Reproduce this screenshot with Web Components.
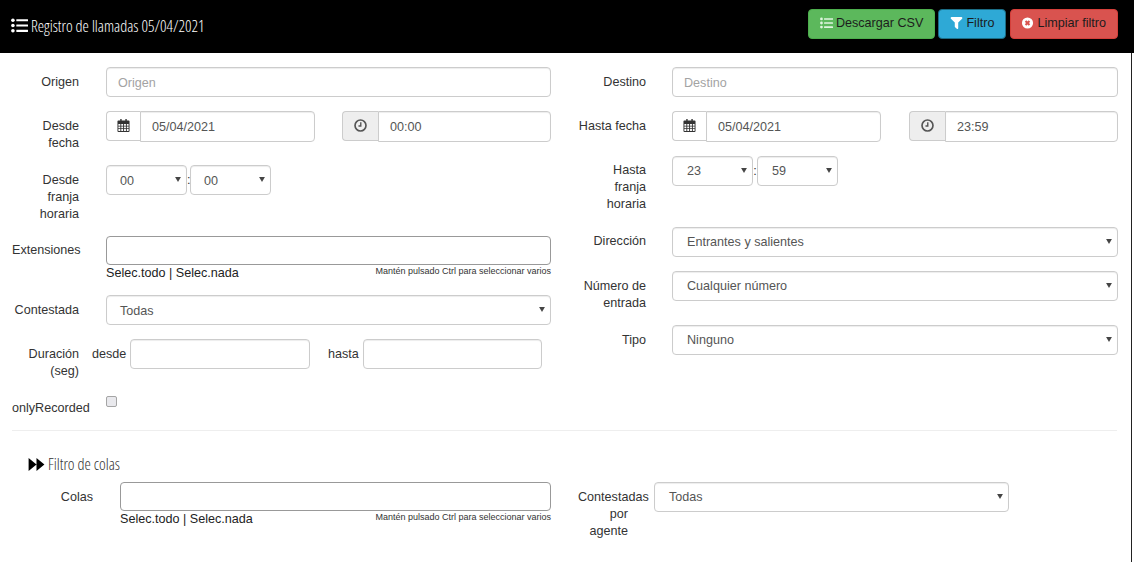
<!DOCTYPE html>
<html lang="es">
<head>
<meta charset="utf-8">
<title>Registro de llamadas</title>
<style>
    html, body { margin: 0; padding: 0; background: #fff; }
    body { font: 12.6px/17px "Liberation Sans", Arial, sans-serif; color: #333; }
</style>
</head>
<body>

<call-page>
    <call-header slot="header" heading="Registro de llamadas 05/04/2021">
        <call-button tone="success" icon="list">Descargar CSV</call-button>
        <call-button tone="info" icon="filter">Filtro</call-button>
        <call-button tone="danger" icon="times" style="margin-left:1px;padding-left:10px">Limpiar filtro</call-button>
    </call-header>

    <call-columns slot="top">
        <div slot="left">
            <call-field label="Origen"><call-input placeholder="Origen"></call-input></call-field>
            <call-field label="Desde fecha">
                <call-pair>
                    <call-addon-input icon="calendar" value="05/04/2021" style="width:209px"></call-addon-input>
                    <call-addon-input icon="clock" value="00:00" style="width:209px"></call-addon-input>
                </call-pair>
            </call-field>
            <call-field label="Desde<br>franja<br>horaria">
                <call-time-range from="00" to="00"></call-time-range>
            </call-field>
            <call-field label="Extensiones" style="--top:6px"><call-multi></call-multi></call-field>
            <call-field label="Contestada"><call-select value="Todas"></call-select></call-field>
            <call-field label="Duración (seg)" style="--gap:13px">
                <call-duration></call-duration>
            </call-field>
            <call-field label="onlyRecorded"><call-check></call-check></call-field>
        </div>
        <div slot="right">
            <call-field label="Destino"><call-input placeholder="Destino"></call-input></call-field>
            <call-field label="Hasta fecha">
                <call-pair>
                    <call-addon-input icon="calendar" value="05/04/2021" style="width:209px"></call-addon-input>
                    <call-addon-input icon="clock" value="23:59" style="width:209px"></call-addon-input>
                </call-pair>
            </call-field>
            <call-field label="Hasta<br>franja<br>horaria" style="--top:6px;--bottom:0px">
                <call-time-range from="23" to="59"></call-time-range>
            </call-field>
            <call-field label="Dirección" style="--top:6px"><call-select value="Entrantes y salientes"></call-select></call-field>
            <call-field label="Número de entrada"><call-select value="Cualquier número"></call-select></call-field>
            <call-field label="Tipo"><call-select value="Ninguno"></call-select></call-field>
        </div>
    </call-columns>

    <call-section slot="section" heading="Filtro de colas"></call-section>

    <call-columns slot="bottom">
        <div slot="left">
            <call-field label="Colas" style="margin-left:14px"><call-multi></call-multi></call-field>
        </div>
        <div slot="right">
            <call-field label="Contestadas por agente" style="--label:50px">
                <call-select value="Todas" style="width:355px"></call-select>
            </call-field>
        </div>
    </call-columns>
</call-page>

<script>
const ICONS = {
    list: `<svg viewBox="0 0 16 14" fill="currentColor"><circle cx="1.8" cy="2" r="1.7"/><circle cx="1.8" cy="7" r="1.7"/><circle cx="1.8" cy="12" r="1.7"/><rect x="5" y="1" width="11" height="2" rx=".3"/><rect x="5" y="6" width="11" height="2" rx=".3"/><rect x="5" y="11" width="11" height="2" rx=".3"/></svg>`,
    filter: `<svg viewBox="0 0 14 14" fill="currentColor"><path d="M.2 .8C.4 .3 .8 0 1.3 0h11.4c.5 0 .9 .3 1.1 .8.2 .4 .1 .9-.3 1.2L9 6.5V13c0 .5-.3 .8-.7 1-.3 .1-.7 0-1-.2L5.4 12c-.2-.2-.4-.5-.4-.8V6.500L.5 2C.1 1.700 0 1.200 .2 .8z"/></svg>`,
    times: `<svg viewBox="0 0 14 14"><circle cx="7" cy="7" r="6.500" fill="currentColor"/><path d="M4.700 4.700l4.600 4.600M9.300 4.700l-4.600 4.600" stroke="#d9534f" stroke-width="2.400" fill="none"/></svg>`,
    calendar: `<svg viewBox="0 0 13 14" fill="currentColor"><path fill-rule="evenodd" d="M3 0h1.500v1.500h4V0H10v1.500h2c.6 0 1 .4 1 1V13c0 .6-.4 1-1 1H1c-.6 0-1-.4-1-1V2.500c0-.6 .4-1 1-1h2zM1 5.500v1.700h2.100V5.500zm3.100 0v1.700h2V5.500zm3 0v1.700h2V5.500zm3 0v1.700H12V5.500zM1 8.200v1.700h2.100V8.200zm3.100 0v1.700h2V8.200zm3 0v1.700h2V8.200zm3 0v1.700H12V8.200zM1 10.900V13h2.100v-2.100zm3.100 0V13h2v-2.100zm3 0V13h2v-2.100zm3 0V13H12v-2.100z"/></svg>`,
    clock: `<svg viewBox="0 0 14 14" fill="none" stroke="currentColor"><circle cx="7" cy="7" r="5.900" stroke-width="1.800"/><path d="M7.300 3.500v4H4.800" stroke-width="1.500"/></svg>`,
    forward: `<svg viewBox="0 0 17 14" fill="currentColor"><path d="M0 0l8.500 7L0 14zM8.500 0L17 7l-8.500 7z"/></svg>`
};

// Base class so every element only has to give its template
class CallElement extends HTMLElement {
    connectedCallback() {
        if (this.shadowRoot) return;
        this.attachShadow({mode: "open"});
        this.shadowRoot.innerHTML = this.render();
    }
    attr(name, fallback = "") {
        return this.getAttribute(name) || fallback;
    }
}

class CallPage extends CallElement {
    render() {
        return `
            <style>
                :host { display: block; width: 1134px; height: 562px; overflow: hidden; }
                main {
                    display: block;
                    width: 1132px;
                    height: 509px;
                    padding-top: 14px;
                    box-sizing: border-box;
                    border-right: 1px solid #222;
                }
            </style>
            <slot name="header"></slot>
            <main>
                <slot name="top"></slot>
                <slot name="section"></slot>
                <slot name="bottom"></slot>
            </main>
        `;
    }
}

class CallHeader extends CallElement {
    render() {
        return `
            <style>
                :host {
                    display: flex;
                    align-items: flex-start;
                    justify-content: space-between;
                    height: 53px;
                    background: #000;
                    color: #fff;
                    padding: 9px 16px 0 11px;
                    box-sizing: border-box;
                }
                h1 {
                    display: flex;
                    align-items: center;
                    gap: 3px;
                    margin: 0;
                    height: 34px;
                    font: 300 17px/34px "Open Sans", sans-serif;
                    font-stretch: 75%;
                    white-space: nowrap;
                }
                svg { width: 17px; height: 15px; display: block; margin-top: -2px; }
                span { display: inline-block; transform: scaleX(.94); transform-origin: left center; }
                div { display: flex; gap: 3px; }
            </style>
            <h1>${ICONS.list}<span>${this.attr("heading")}</span></h1>
            <div><slot></slot></div>
        `;
    }
}

class CallButton extends CallElement {
    render() {
        const tones = {success: "#5cb85c", info: "#2ea9d6", danger: "#d9534f"};
        const border = {success: "#4cae4c", info: "#1b6d85", danger: "#d43f3a"};
        const tone = this.attr("tone", "success");
        return `
            <style>
                :host {
                    display: flex;
                    align-items: center;
                    gap: 3px;
                    height: 30px;
                    padding: 0 11px 2px;
                    box-sizing: border-box;
                    background: ${tones[tone]};
                    border: 1px solid ${border[tone]};
                    border-radius: 4px;
                    color: #1c1c1c;
                    font: 12.6px/17px "Liberation Sans", sans-serif;
                    white-space: nowrap;
                }
                i { display: block; width: 13px; height: 12px; color: ${tone === "success" ? "#dff5df" : "#fff"}; }
                svg { display: block; width: 100%; height: 100%; }
            </style>
            <i>${ICONS[this.attr("icon")]}</i><slot></slot>
        `;
    }
}

class CallColumns extends CallElement {
    render() {
        return `
            <style>
                :host { display: grid; grid-template-columns: 567px 567px; }
                .left { padding: 0 16px 0 12px; --pad: 13px; --colon: 3px; --sel: 2px; }
                .right { padding: 0 16px 0 11px; --label: 68px; --gap: 26px; --pad: 14px; --colon: 4px; --sel: 0px; }
            </style>
            <div class="left"><slot name="left"></slot></div>
            <div class="right"><slot name="right"></slot></div>
        `;
    }
}

class CallField extends CallElement {
    render() {
        return `
            <style>
                :host { display: flex; align-items: flex-start; margin-bottom: 14px; gap: var(--gap, 27px); }
                label {
                    flex: none;
                    width: var(--label, 67px);
                    padding-top: var(--top, 7px);
                    margin-bottom: var(--bottom, -1px);
                    text-align: right;
                    color: #333;
                    font: 12.6px/17px "Liberation Sans", sans-serif;
                }
                div { flex: 1; min-width: 0; }
            </style>
            <label>${this.attr("label")}</label>
            <div><slot></slot></div>
        `;
    }
}

class CallInput extends CallElement {
    render() {
        const empty = !this.getAttribute("value");
        return `
            <style>
                :host {
                    display: block;
                    height: 30px;
                    padding: 0 11px;
                    box-sizing: border-box;
                    background: #fff;
                    border: 1px solid #ccc;
                    border-radius: 4px;
                    box-shadow: inset 0 1px 1px rgba(0,0,0,.075);
                    font: 12.6px/30px "Liberation Sans", sans-serif;
                    color: ${empty ? "#a3a3a3" : "#555"};
                }
            </style>
            ${this.attr("value") || this.attr("placeholder")}
        `;
    }
}

class CallAddonInput extends CallElement {
    render() {
        const clock = this.attr("icon") === "clock";
        return `
            <style>
                :host { display: flex; height: 31px; box-sizing: border-box; align-items: flex-start; }
                i {
                    flex: none;
                    display: flex;
                    align-items: center;
                    justify-content: center;
                    width: ${clock ? 36 : 34}px;
                    height: 30px;
                    box-sizing: border-box;
                    padding-bottom: 2px;
                    background: ${clock ? "#eee" : "#fff"};
                    border: 1px solid #ccc;
                    border-right: 0;
                    border-radius: 4px 0 0 4px;
                    color: ${clock ? "#555" : "#333"};
                }
                svg { display: block; width: 13px; height: 13px; }
                span {
                    flex: 1;
                    height: 31px;
                    padding-left: 11px;
                    box-sizing: border-box;
                    background: #fff;
                    border: 1px solid #ccc;
                    border-radius: 0 4px 4px 0;
                    box-shadow: inset 0 1px 1px rgba(0,0,0,.075);
                    font: 12.6px/30px "Liberation Sans", sans-serif;
                    color: #555;
                }
            </style>
            <i>${ICONS[this.attr("icon")]}</i><span>${this.attr("value")}</span>
        `;
    }
}

class CallPair extends CallElement {
    render() {
        return `
            <style>
                :host { display: flex; justify-content: space-between; }
            </style>
            <slot></slot>
        `;
    }
}

class CallSelect extends CallElement {
    render() {
        return `
            <style>
                :host {
                    display: flex;
                    align-items: center;
                    justify-content: space-between;
                    height: 30px;
                    padding: 0 5px 0 var(--pad, 14px);
                    box-sizing: border-box;
                    background: #fff;
                    border: 1px solid #ccc;
                    border-radius: 4px;
                    box-shadow: inset 0 1px 1px rgba(0,0,0,.075);
                    font: 12.6px/17px "Liberation Sans", sans-serif;
                    color: #555;
                }
                span { padding-top: var(--sel, 0); }
                svg { display: block; width: 6px; height: 5px; margin-top: -2px; fill: #444; }
            </style>
            <span>${this.attr("value")}</span>
            <svg viewBox="0 0 7 6"><path d="M0 0h7L3.500 6z"/></svg>
        `;
    }
}

class CallTimeRange extends CallElement {
    render() {
        return `
            <style>
                :host { display: flex; align-items: center; }
                call-select { width: 81px; }
                b { width: var(--colon, 3px); font: 12.6px/17px "Liberation Sans", sans-serif; color: #333; text-align: center; }
            </style>
            <call-select value="${this.attr("from")}"></call-select>
            <b>:</b>
            <call-select value="${this.attr("to")}"></call-select>
        `;
    }
}

class CallMulti extends CallElement {
    render() {
        return `
            <style>
                :host { display: block; font: 12.6px/16px "Liberation Sans", sans-serif; color: #222; }
                .box {
                    height: 29px;
                    box-sizing: border-box;
                    background: #fff;
                    border: 1px solid #999;
                    border-radius: 4px;
                }
                .foot { display: flex; justify-content: space-between; align-items: flex-start; height: 16px; }
                small { font-size: 9px; line-height: 12px; color: #333; }
            </style>
            <div class="box"></div>
            <div class="foot">
                <span>Selec.todo | Selec.nada</span>
                <small>Mantén pulsado Ctrl para seleccionar varios</small>
            </div>
        `;
    }
}

class CallDuration extends CallElement {
    render() {
        return `
            <style>
                :host { display: flex; align-items: center; font: 12.6px/17px "Liberation Sans", sans-serif; color: #333; }
                call-input { width: 180px; }
                call-input + span + call-input { width: 179px; }
                .from { width: 38px; }
                .to { width: 35px; margin-left: 18px; }
            </style>
            <span class="from">desde</span><call-input></call-input>
            <span class="to">hasta</span><call-input></call-input>
        `;
    }
}

class CallCheck extends CallElement {
    render() {
        return `
            <style>
                :host {
                    display: block;
                    width: 11px;
                    height: 11px;
                    margin-top: 3px;
                    box-sizing: border-box;
                    background: #e9e9ed;
                    border: 1px solid #a5a5a5;
                    border-radius: 2px;
                }
            </style>
        `;
    }
}

class CallSection extends CallElement {
    render() {
        return `
            <style>
                :host { display: block; padding: 0 14px 0 12px; }
                hr { margin: 0; border: 0; border-top: 1px solid #eee; }
                h2 {
                    display: flex;
                    align-items: center;
                    gap: 3px;
                    margin: 21px 0 6px 16px;
                    height: 24px;
                    font: 300 16px/24px "Open Sans", sans-serif;
                    font-stretch: 75%;
                    color: #333;
                    white-space: nowrap;
                }
                svg { display: block; width: 17px; height: 13px; color: #000; }
            </style>
            <hr>
            <h2>${ICONS.forward}<span>${this.attr("heading")}</span></h2>
        `;
    }
}

customElements.define("call-page", CallPage);
customElements.define("call-header", CallHeader);
customElements.define("call-button", CallButton);
customElements.define("call-columns", CallColumns);
customElements.define("call-field", CallField);
customElements.define("call-input", CallInput);
customElements.define("call-addon-input", CallAddonInput);
customElements.define("call-pair", CallPair);
customElements.define("call-select", CallSelect);
customElements.define("call-time-range", CallTimeRange);
customElements.define("call-multi", CallMulti);
customElements.define("call-duration", CallDuration);
customElements.define("call-check", CallCheck);
customElements.define("call-section", CallSection);
</script>
</body>
</html>
